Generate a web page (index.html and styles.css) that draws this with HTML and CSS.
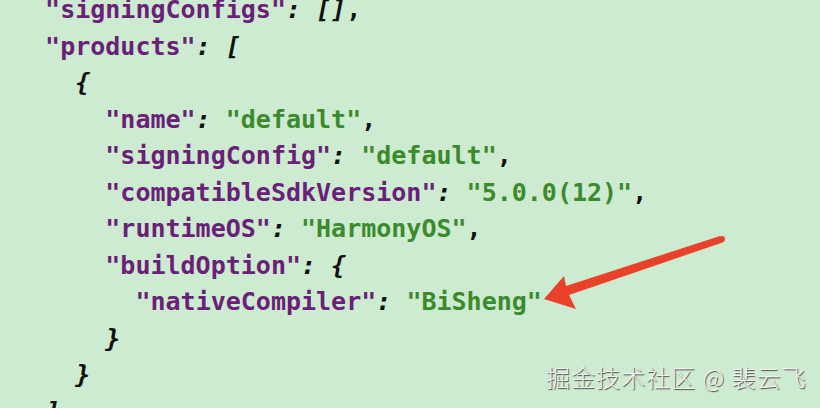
FILE: index.html
```html
<!DOCTYPE html>
<html>
<head>
<meta charset="utf-8">
<link rel="stylesheet" href="styles.css">
</head>
<body>
<div class="page">
<pre class="code"><span class="line">  <span class="k">"signingConfigs"</span><span class="p">: []</span>,</span>
<span class="line">  <span class="k">"products"</span><span class="p">: [</span></span>
<span class="line">    <span class="p">{</span></span>
<span class="line">      <span class="k">"name"</span><span class="p">:</span> <span class="s">"default"</span>,</span>
<span class="line">      <span class="k">"signingConfig"</span><span class="p">:</span> <span class="s">"default"</span>,</span>
<span class="line">      <span class="k">"compatibleSdkVersion"</span><span class="p">:</span> <span class="s">"5.0.0(12)"</span>,</span>
<span class="line">      <span class="k">"runtimeOS"</span><span class="p">:</span> <span class="s">"HarmonyOS"</span>,</span>
<span class="line">      <span class="k">"buildOption"</span><span class="p">: {</span></span>
<span class="line">        <span class="k">"nativeCompiler"</span><span class="p">:</span> <span class="s">"BiSheng"</span></span>
<span class="line">      <span class="p">}</span></span>
<span class="line">    <span class="p">}</span></span>
<span class="line">  <span class="p">]</span></span></pre>
<svg class="arrow" width="820" height="408" viewBox="0 0 820 408">
  <circle cx="722" cy="239" r="3" fill="#e8432a"/>
  <polygon points="720,236 724,242 569,295 576,309 544,299 564,276 566,286" fill="#e8432a"/>
</svg>
<div class="watermark">掘金技术社区 @ 裴云飞</div>
</div>
</body>
</html>
```
FILE: styles.css
```css
html, body {
  margin: 0;
  padding: 0;
  background: #cdebd0;
}
.page {
  position: relative;
  width: 820px;
  height: 408px;
  overflow: hidden;
  background: #cdebd0;
}
.code {
  margin: 0;
  padding: 0 0 0 15px;
  margin-top: -8px;
  font-family: "DejaVu Sans Mono", monospace;
  font-weight: bold;
  font-size: 25px;
  line-height: 36.5px;
  color: #111;
}
.line { display: inline; }
.k { color: #6a1f78; }
.s { color: #3b8a2c; }
.p { font-style: italic; color: #111; }
.arrow {
  position: absolute;
  left: 0;
  top: 0;
}
.watermark {
  position: absolute;
  left: 546px;
  top: 361px;
  font-family: "Noto Sans CJK SC", sans-serif;
  font-weight: 300;
  font-size: 24px;
  line-height: 32px;
  color: #f2f2f2;
  text-shadow: 1px 1px 1px #4a4a4a;
  letter-spacing: 1px;
}
```
